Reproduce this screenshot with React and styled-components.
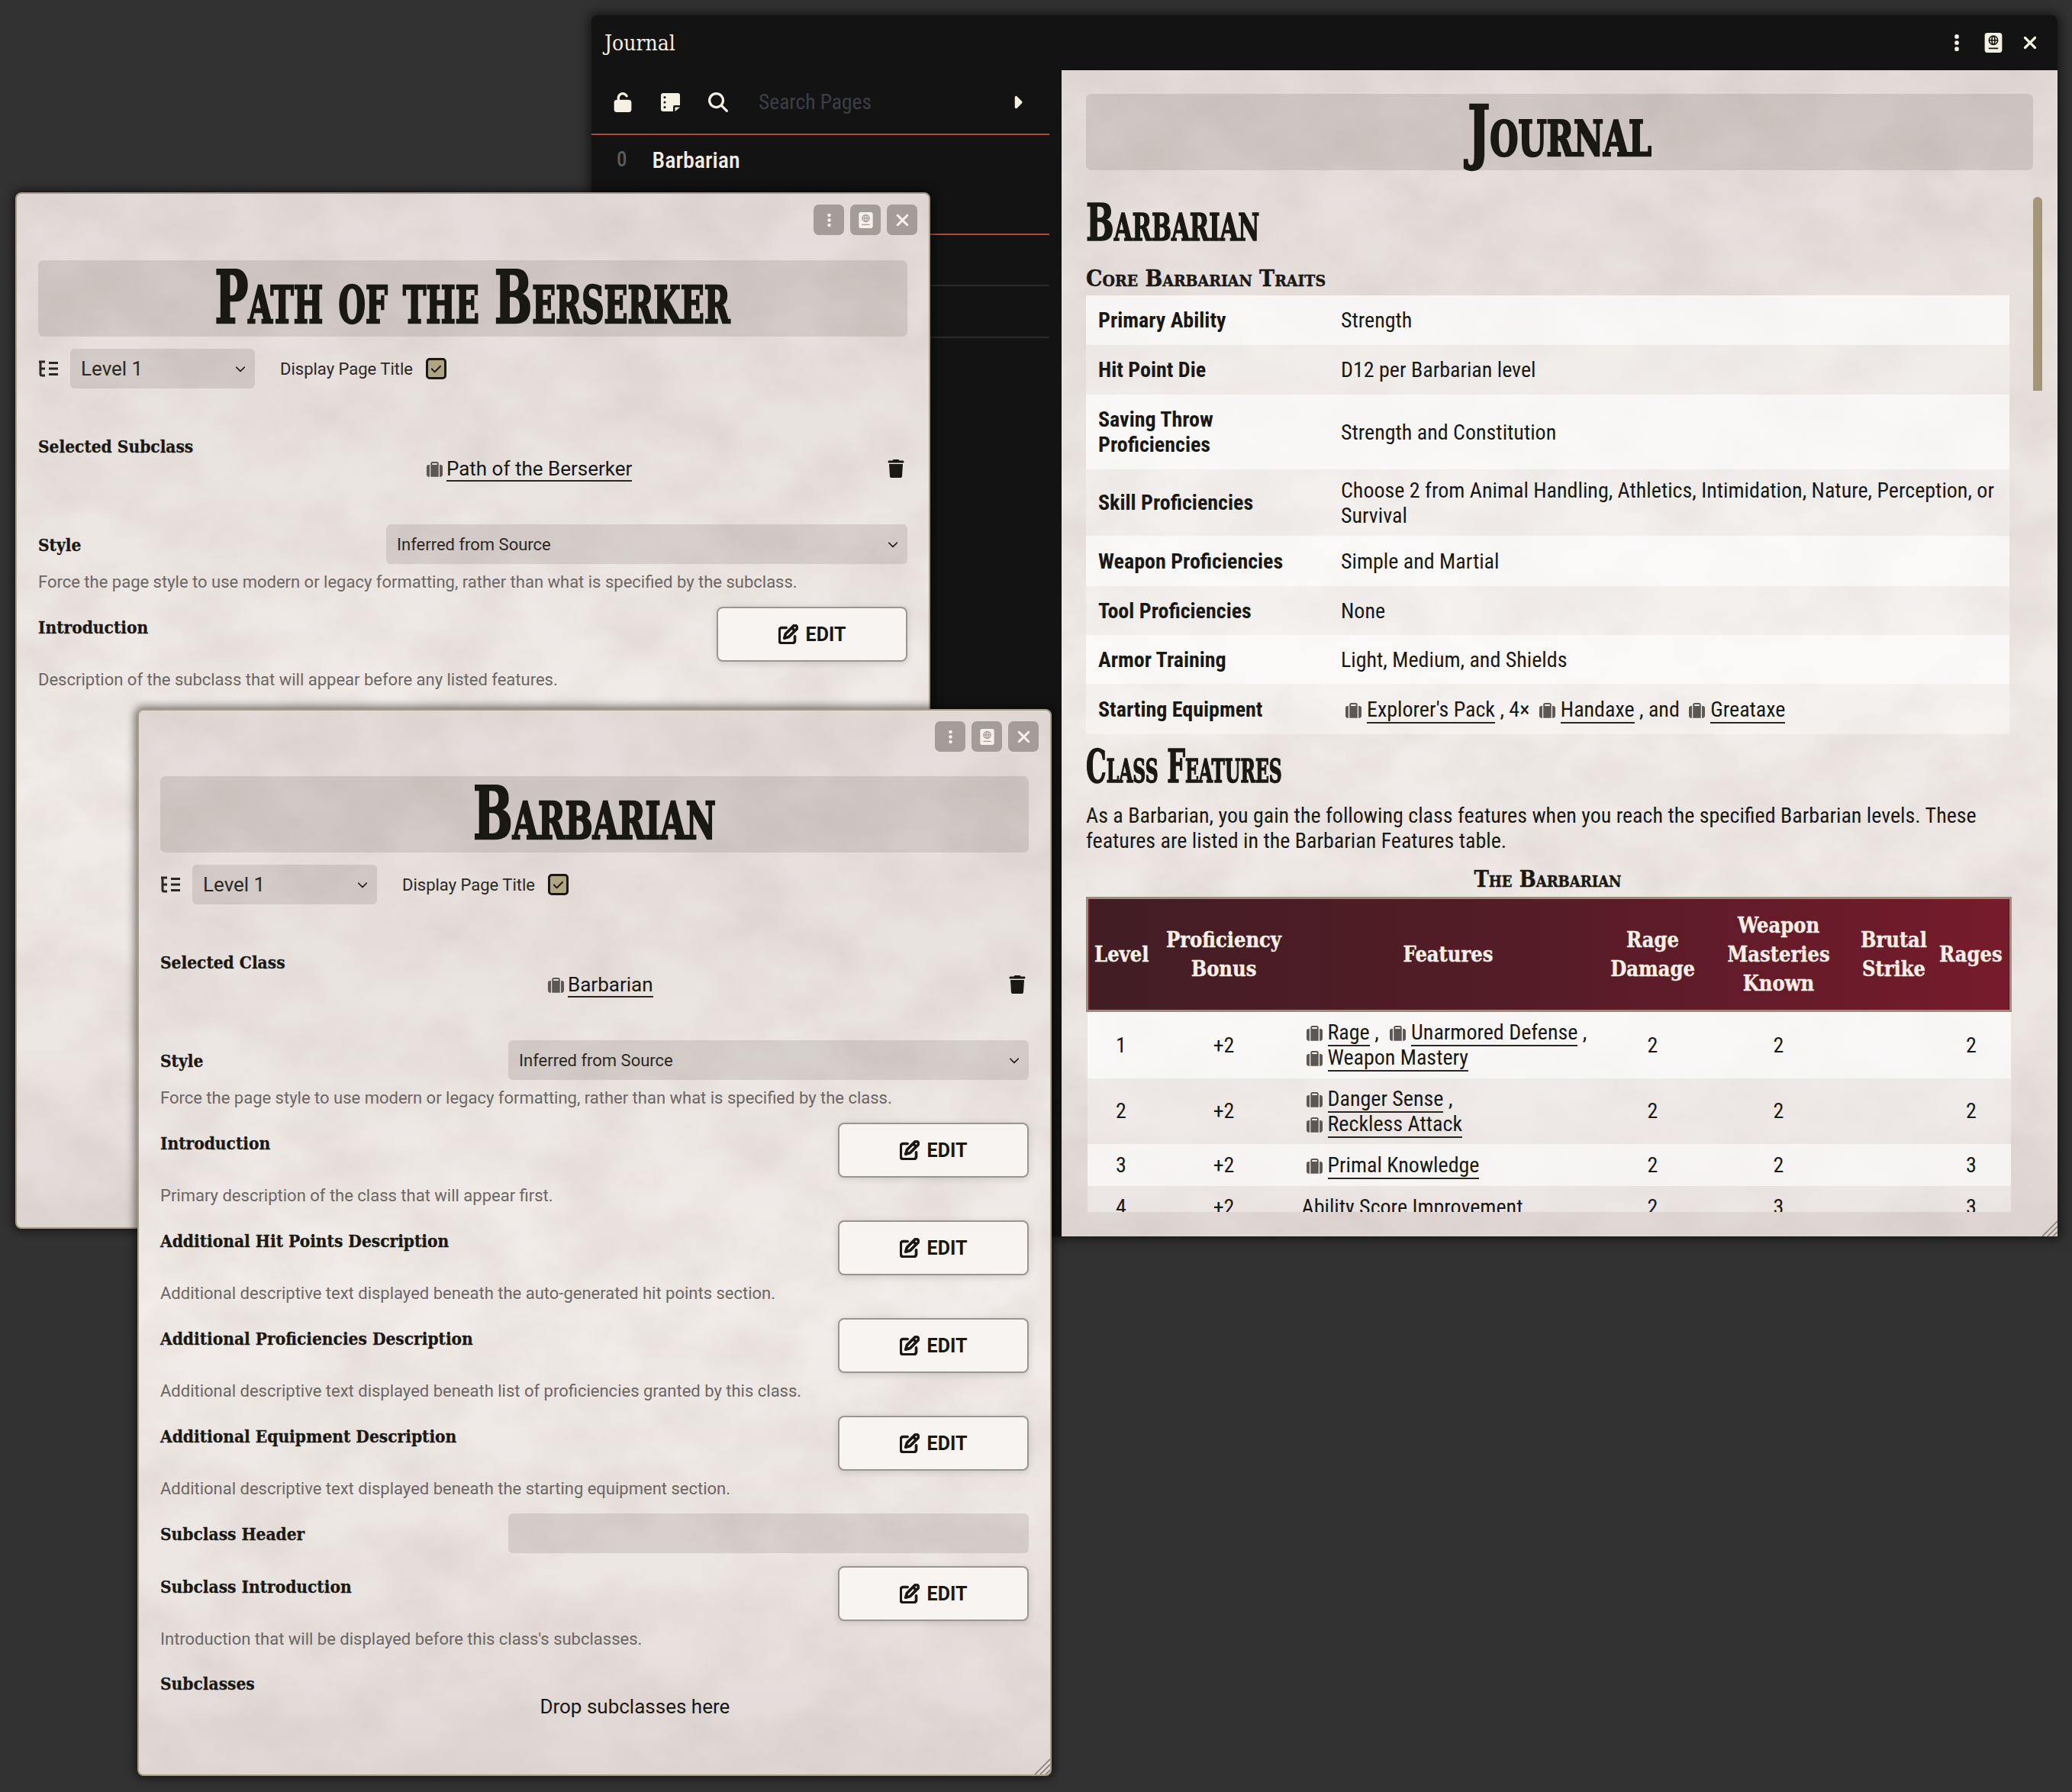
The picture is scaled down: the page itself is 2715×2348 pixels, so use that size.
import React from 'react';
import styled, { createGlobalStyle } from 'styled-components';
import { FaUnlock, FaMagnifyingGlass, FaCaretRight, FaEllipsisVertical, FaPassport, FaXmark, FaChevronDown, FaTrash, FaSuitcase, FaRegPenToSquare, FaCheck } from 'react-icons/fa6';

const noiseSvg = `<svg xmlns="http://www.w3.org/2000/svg" width="1400" height="1400"><filter id="n" x="0" y="0" width="100%" height="100%"><feTurbulence type="fractalNoise" baseFrequency="0.009 0.012" numOctaves="5" seed="7" stitchTiles="stitch"/><feColorMatrix values="0 0 0 0 0.45 0 0 0 0 0.36 0 0 0 0 0.33 0.36 0 0 0 -0.115"/></filter><rect width="1400" height="1400" filter="url(#n)"/></svg>`;
const noise = `url("data:image/svg+xml,${encodeURIComponent(noiseSvg)}")`;

const GlobalStyle = createGlobalStyle`
  html, body { margin: 0; padding: 0; background: #323232; }
  #root { width: 2715px; height: 2348px; position: relative; overflow: hidden; font-family: Roboto, sans-serif; color: #191813; }
  * { box-sizing: border-box; }
`;

const slab = `"DejaVu Serif Condensed", "DejaVu Serif", serif`;

const Desktop = styled.div`
  position: relative;
  width: 2715px;
  height: 2348px;
  background: #323232;
`;

const JournalWindow = styled.section`
  position: absolute;
  left: 775px;
  top: 20px;
  width: 1921px;
  height: 1600px;
  background: #131313;
  border-radius: 8px 8px 0 0;
  box-shadow: 0 0 14px 4px rgba(0, 0, 0, 0.55);
  display: flex;
  flex-direction: column;
`;

const JournalBar = styled.header`
  height: 72px;
  flex: none;
  display: flex;
  align-items: center;
  justify-content: space-between;
  padding: 0 23px 0 17px;
  color: #f5f0e4;
`;

const JournalTitle = styled.h4`
  margin: 0;
  font: 400 28px ${slab};
  color: #f2ede1;
`;

const BarIcons = styled.div`
  display: flex;
  align-items: center;
  gap: 22px;
  font-size: 26px;
  svg { display: block; }
`;

const JournalBody = styled.div`
  flex: 1;
  display: flex;
  min-height: 0;
`;

const Sidebar = styled.aside`
  width: 600px;
  flex: none;
  margin-right: 16px;
`;

const SearchRow = styled.div`
  height: 85px;
  display: flex;
  align-items: center;
  padding: 0 29px 0 28px;
  color: #f5f0e4;
  border-bottom: 2px solid #b34a33;
  font-size: 26px;
  gap: 37px;
  svg { display: block; flex: none; }
`;

const SearchInput = styled.div`
  flex: 1;
  height: 52px;
  padding-left: 3px;
  display: flex;
  align-items: center;
  color: #3c3e47;
  font-size: 27.5px;
  font-stretch: 75%;
`;

const PageRow = styled.div`
  height: ${p => p.$h}px;
  display: flex;
  align-items: center;
  padding-left: 33px;
  gap: 33px;
  border-bottom: 2px solid ${p => p.$line};
`;

const PageNumber = styled.span`
  font-size: 27px;
  color: #5b5b5b;
  font-weight: 500;
  font-stretch: 75%;
`;

const PageName = styled.span`
  font-size: 30px;
  color: #f3eee2;
  font-weight: 500;
  font-stretch: 75%;
`;

const Paper = styled.div`
  background-color: #e9e2df;
  background-image: ${noise}, linear-gradient(180deg, #e4dcda 0%, #e9e3e0 22%, #f2edea 55%, #ece6e3 82%, #e0d7d5 100%);
`;

const Sheet = styled(Paper)`
  flex: 1;
  height: 1528px;
  position: relative;
  padding: 31px 32px 32px;
  overflow: hidden;
`;

const SheetScroll = styled.div`
  height: 1465px;
  overflow: hidden;
  font-size: 28px;
  line-height: 33px;
  font-stretch: 75%;
`;

const Banner = styled.div`
  height: 100px;
  background: rgba(70, 55, 48, 0.13);
  border-radius: 7px;
  display: flex;
  align-items: center;
  justify-content: center;
  margin: ${p => p.$margin || '0'};
  padding-bottom: 2px;
`;

const DisplayTitle = styled.h1`
  margin: 0;
  flex: none;
  white-space: nowrap;
  font: 700 ${p => p.$size || 96}px/1 ${slab};
  font-variant: small-caps;
  color: #191813;
  -webkit-text-stroke: 2.5px #191813;
  transform: scaleX(${p => p.$squeeze || 0.72});
`;

const Scrollbar = styled.div`
  position: absolute;
  right: 20px;
  top: 166px;
  width: 12px;
  height: 254px;
  background: #a39677;
  border-radius: 6px 6px 0 0;
`;

const SectionTitle = styled.h2`
  margin: ${p => p.$margin};
  font: 700 ${p => p.$size}px/1 ${slab};
  font-variant: small-caps;
  color: #191813;
  -webkit-text-stroke: 1.5px #191813;
  transform-origin: left center;
  transform: scaleX(${p => p.$squeeze});
  white-space: nowrap;
`;

const SubTitle = styled.h3`
  margin: ${p => p.$margin};
  width: 1210px;
  font: 700 ${p => p.$size || 30}px/1 ${slab};
  font-variant: small-caps;
  -webkit-text-stroke: 0.4px #191813;
  text-align: ${p => p.$align || 'left'};
  color: #191813;
`;

const InfoTable = styled.table`
  width: 1210px;
  border-collapse: collapse;
  table-layout: fixed;
`;

const InfoRow = styled.tr`
  height: ${p => p.$h}px;
  background: ${p => (p.$alt ? 'rgba(255,255,255,0.35)' : 'rgba(255,255,255,0.72)')};
`;

const InfoLabel = styled.td`
  width: 318px;
  padding: 0 16px;
  font-weight: 700;
`;

const InfoValue = styled.td`
  padding: 0 16px;
`;

const Para = styled.p`
  margin: 0;
  width: 1210px;
`;

const FeatureTable = styled.table`
  width: 1210px;
  border-collapse: collapse;
  table-layout: fixed;
  text-align: center;
`;

const HeadRow = styled.tr`
  height: 148px;
  background: linear-gradient(90deg, #421d24 0%, #561c27 50%, #761b2c 100%);
  border: 3px solid #9a8f75;
`;

const HeadCell = styled.th`
  width: ${p => p.$w}px;
  padding: 0 2px;
  color: #f5f0e6;
  font: 700 27px/38px ${slab};
  -webkit-text-stroke: 0.4px #f5f0e6;
`;

const FeatureRow = styled.tr`
  height: ${p => p.$h}px;
  background: ${p => (p.$alt ? 'rgba(255,255,255,0.35)' : 'rgba(255,255,255,0.72)')};
`;

const FeatureCell = styled.td`
  padding: 0;
`;

const FeatureList = styled.td`
  padding: 0 0 0 ${p => (p.$plain ? 12 : 18)}px;
  text-align: left;
`;

const Link = styled.span`
  white-space: nowrap;
  svg { font-size: 21px; color: #5c5753; margin: 0 7px 0 ${p => p.$lead || 0}px; vertical-align: -3px; }
  b { font-weight: 400; border-bottom: 2px solid #2a2723; }
`;

const Window = styled(Paper)`
  position: absolute;
  left: ${p => p.$x}px;
  top: ${p => p.$y}px;
  width: ${p => p.$w}px;
  height: ${p => p.$h}px;
  border: 2px solid #a79d85;
  border-radius: 8px;
  box-shadow: 0 0 12px 3px rgba(0, 0, 0, 0.55);
  padding: 14px 28px 0;
  overflow: hidden;
`;

const Controls = styled.div`
  display: flex;
  justify-content: flex-end;
  gap: 8px;
  margin-right: -13px;
`;

const ControlButton = styled.button`
  width: 40px;
  height: 40px;
  padding: 0;
  border: none;
  border-radius: 7px;
  background: #a49c99;
  color: #f5f0e8;
  font-size: ${p => p.$icon || 21}px;
  display: flex;
  align-items: center;
  justify-content: center;
`;

const PageTools = styled.div`
  display: flex;
  align-items: center;
  margin-top: 16px;
  height: 52px;
`;

const ToolIcon = styled.svg`
  width: 26px;
  height: 22px;
  margin-right: 16px;
  flex: none;
`;

const SelectBox = styled.div`
  width: ${p => p.$w || 'auto'};
  flex: none;
  height: 52px;
  background: rgba(70, 55, 48, 0.13);
  border-radius: 6px;
  display: flex;
  align-items: center;
  justify-content: space-between;
  padding: 0 12px 0 14px;
  font-size: ${p => p.$font}px;
  color: #2b2824;
  svg { font-size: 14px; color: #191813; }
`;

const ToolLabel = styled.label`
  display: flex;
  align-items: center;
  margin-left: 33px;
  gap: 17px;
  font-size: 22px;
  color: #2b2824;
`;

const CheckBox = styled.span`
  width: 27px;
  height: 28px;
  background: #b0a582;
  border: 3px solid #191813;
  border-radius: 5px;
  display: flex;
  align-items: center;
  justify-content: center;
  font-size: 15px;
  color: #191813;
`;

const SourceRow = styled.div`
  display: flex;
  height: 100px;
  margin-top: 55px;
  position: relative;
`;

const FieldLabel = styled.span`
  font: 700 22.5px/26px ${slab};
  padding-top: ${p => p.$top ?? 14}px;
  -webkit-text-stroke: 0.3px #191813;
  color: #191813;
`;

const SourceZone = styled.div`
  flex: 1;
  display: flex;
  align-items: center;
  justify-content: center;
  padding-right: ${p => p.$pad || 0}px;
  margin-right: ${p => p.$gutter}px;
  font-size: 26px;
  svg { margin-right: 5px; }
`;

const Trash = styled.span`
  position: absolute;
  right: 3px;
  top: 50%;
  transform: translateY(-50%);
  font-size: 24px;
  color: #191813;
  svg { display: block; }
`;

const Field = styled.div`
  margin-top: ${p => p.$top ?? 20}px;
`;

const FieldRow = styled.div`
  display: grid;
  grid-template-columns: 456px 1fr;
  min-height: 52px;
`;

const EditButton = styled.button`
  justify-self: end;
  width: 250px;
  height: 72px;
  background: #f7f4f1;
  border: 2px solid #9a9591;
  border-radius: 8px;
  box-shadow: 0 2px 10px rgba(0, 0, 0, 0.14);
  display: flex;
  align-items: center;
  justify-content: center;
  gap: 10px;
  font: 700 25px Roboto, sans-serif;
  color: #191813;
  svg { font-size: 26px; stroke: currentColor; stroke-width: 24px; }
`;

const Hint = styled.p`
  margin: 12px 0 0;
  font-size: 22px;
  line-height: 24px;
  color: #6b6663;
`;

const DropRow = styled.div`
  display: flex;
  margin-top: 19px;
`;

const DropText = styled.div`
  flex: 1;
  text-align: center;
  font-size: 26px;
  padding: 42px 18px 0 0;
`;

const Handle = styled.svg`
  position: absolute;
  right: 0;
  bottom: 0;
  width: 24px;
  height: 24px;
`;

const NoteIcon = () => (
  <svg width="25" height="24" viewBox="0 0 25 24">
    <path d="M3 0h19a3 3 0 0 1 3 3v13h-7a2 2 0 0 0-2 2v6H3a3 3 0 0 1-3-3V3a3 3 0 0 1 3-3z" fill="#f5f0e4" />
    <path d="M18.500 18.500H25L18.500 24z" fill="#f5f0e4" />
    <circle cx="5" cy="5.500" r="1.500" fill="#131313" />
    <circle cx="5" cy="12" r="1.500" fill="#131313" />
    <circle cx="5" cy="18.500" r="1.500" fill="#131313" />
  </svg>
);

const TreeIcon = () => (
  <ToolIcon viewBox="0 0 26 22" fill="none" stroke="#2b2824" strokeWidth="3">
    <path d="M3 1v17a2 2 0 0 0 2 2h4M3 11h6M1 2h8" />
    <path d="M14 3.500h12M14 11h12M14 18.500h12" />
  </ToolIcon>
);

const ResizeGrip = () => (
  <Handle viewBox="0 0 24 24" fill="none" stroke="#7d766a" strokeWidth="1.500">
    <path d="M4 24L24 4M11 24L24 11M18 24l6-6" />
  </Handle>
);

const ItemLink = ({ children, lead }) => (
  <Link $lead={lead}><FaSuitcase /><b>{children}</b></Link>
);

const traits = [
  { label: 'Primary Ability', value: 'Strength', h: 65 },
  { label: 'Hit Point Die', value: 'D12 per Barbarian level', h: 65 },
  { label: 'Saving Throw Proficiencies', value: 'Strength and Constitution', h: 98 },
  { label: 'Skill Proficiencies', value: 'Choose 2 from Animal Handling, Athletics, Intimidation, Nature, Perception, or Survival', h: 87 },
  { label: 'Weapon Proficiencies', value: 'Simple and Martial', h: 66 },
  { label: 'Tool Proficiencies', value: 'None', h: 64 },
  { label: 'Armor Training', value: 'Light, Medium, and Shields', h: 64 },
];

const columns = [
  { w: 89, lines: ['Level'] },
  { w: 180, lines: ['Proficiency', 'Bonus'] },
  { w: 408, lines: ['Features'] },
  { w: 128, lines: ['Rage', 'Damage'] },
  { w: 202, lines: ['Weapon', 'Masteries', 'Known'] },
  { w: 100, lines: ['Brutal', 'Strike'] },
  { w: 103, lines: ['Rages'] },
];

const levels = [
  { n: 1, rage: 2, masteries: 2, rages: 2, h: 88, features: <><ItemLink>Rage</ItemLink> , <ItemLink lead={8}>Unarmored Defense</ItemLink> ,<br /><ItemLink>Weapon Mastery</ItemLink></> },
  { n: 2, rage: 2, masteries: 2, rages: 2, h: 86, features: <><ItemLink>Danger Sense</ItemLink> ,<br /><ItemLink>Reckless Attack</ItemLink></> },
  { n: 3, rage: 2, masteries: 2, rages: 3, h: 55, features: <ItemLink>Primal Knowledge</ItemLink> },
  { n: 4, rage: 2, masteries: 3, rages: 3, h: 55, features: 'Ability Score Improvement', plain: true },
];

const BuilderFields = ({ items }) => items.map(item => (
  <Field key={item.label} $top={item.top}>
    <FieldRow>
      <FieldLabel>{item.label}</FieldLabel>
      {item.select !== undefined
        ? <SelectBox $font={22}>{item.select}{item.select && <FaChevronDown />}</SelectBox>
        : <EditButton><FaRegPenToSquare />EDIT</EditButton>}
    </FieldRow>
    {item.hint && <Hint>{item.hint}</Hint>}
  </Field>
));

const WindowHead = ({ title, size, squeeze, bannerTop }) => (
  <>
    <Controls>
      <ControlButton><FaEllipsisVertical /></ControlButton>
      <ControlButton><FaPassport /></ControlButton>
      <ControlButton $icon={25}><FaXmark /></ControlButton>
    </Controls>
    <Banner $margin={`${bannerTop}px 0 0`}><DisplayTitle $size={size} $squeeze={squeeze}>{title}</DisplayTitle></Banner>
    <PageTools>
      <TreeIcon />
      <SelectBox $w="242px" $font={26}>Level 1<FaChevronDown /></SelectBox>
      <ToolLabel>Display Page Title<CheckBox><FaCheck /></CheckBox></ToolLabel>
    </PageTools>
  </>
);

const subclassFields = [
  { label: 'Style', select: 'Inferred from Source', top: 23, hint: 'Force the page style to use modern or legacy formatting, rather than what is specified by the subclass.' },
  { label: 'Introduction', hint: 'Description of the subclass that will appear before any listed features.' },
];

const classFields = [
  { label: 'Style', select: 'Inferred from Source', top: 23, hint: 'Force the page style to use modern or legacy formatting, rather than what is specified by the class.' },
  { label: 'Introduction', hint: 'Primary description of the class that will appear first.' },
  { label: 'Additional Hit Points Description', hint: 'Additional descriptive text displayed beneath the auto-generated hit points section.' },
  { label: 'Additional Proficiencies Description', hint: 'Additional descriptive text displayed beneath list of proficiencies granted by this class.' },
  { label: 'Additional Equipment Description', hint: 'Additional descriptive text displayed beneath the starting equipment section.' },
  { label: 'Subclass Header', select: '' },
  { label: 'Subclass Introduction', top: 17, hint: "Introduction that will be displayed before this class's subclasses." },
];

export default function App() {
  return (
    <Desktop>
      <GlobalStyle />

      <JournalWindow>
        <JournalBar>
          <JournalTitle>Journal</JournalTitle>
          <BarIcons>
            <FaEllipsisVertical />
            <FaPassport />
            <FaXmark />
          </BarIcons>
        </JournalBar>
        <JournalBody>
          <Sidebar>
            <SearchRow>
              <FaUnlock />
              <NoteIcon />
              <FaMagnifyingGlass />
              <SearchInput>Search Pages</SearchInput>
              <FaCaretRight />
            </SearchRow>
            <PageRow $h={66} $line="transparent"><PageNumber>0</PageNumber><PageName>Barbarian</PageName></PageRow>
            <PageRow $h={65} $line="#b34a33" />
            <PageRow $h={67} $line="#2a2a2a" />
            <PageRow $h={68} $line="#2a2a2a" />
          </Sidebar>
          <Sheet>
            <SheetScroll>
              <Banner><DisplayTitle $size={92} $squeeze={0.74}>Journal</DisplayTitle></Banner>
              <SectionTitle $size={68} $squeeze={0.71} $margin="34px 0 0">Barbarian</SectionTitle>
              <SubTitle $margin="25px 0 7px">Core Barbarian Traits</SubTitle>
              <InfoTable>
                <tbody>
                  {traits.map((row, i) => (
                    <InfoRow key={row.label} $h={row.h} $alt={i % 2 === 1}>
                      <InfoLabel>{row.label}</InfoLabel>
                      <InfoValue>{row.value}</InfoValue>
                    </InfoRow>
                  ))}
                  <InfoRow $h={66} $alt>
                    <InfoLabel>Starting Equipment</InfoLabel>
                    <InfoValue><ItemLink lead={6}>Explorer's Pack</ItemLink> , 4× <ItemLink lead={6}>Handaxe</ItemLink> , and <ItemLink lead={6}>Greataxe</ItemLink></InfoValue>
                  </InfoRow>
                </tbody>
              </InfoTable>
              <SectionTitle $size={60} $squeeze={0.62} $margin="12px 0 18px">Class Features</SectionTitle>
              <Para>As a Barbarian, you gain the following class features when you reach the specified Barbarian levels. These features are listed in the Barbarian Features table.</Para>
              <SubTitle $size={29} $align="center" $margin="20px 0 8px">The Barbarian</SubTitle>
              <FeatureTable>
                <thead>
                  <HeadRow>
                    {columns.map(col => (
                      <HeadCell key={col.lines[0]} $w={col.w}>
                        {col.lines.map((line, i) => <React.Fragment key={line}>{i > 0 && <br />}{line}</React.Fragment>)}
                      </HeadCell>
                    ))}
                  </HeadRow>
                </thead>
                <tbody>
                  {levels.map((row, i) => (
                    <FeatureRow key={row.n} $h={row.h} $alt={i % 2 === 1}>
                      <FeatureCell>{row.n}</FeatureCell>
                      <FeatureCell>+2</FeatureCell>
                      <FeatureList $plain={row.plain}>{row.features}</FeatureList>
                      <FeatureCell>{row.rage}</FeatureCell>
                      <FeatureCell>{row.masteries}</FeatureCell>
                      <FeatureCell />
                      <FeatureCell>{row.rages}</FeatureCell>
                    </FeatureRow>
                  ))}
                </tbody>
              </FeatureTable>
            </SheetScroll>
            <Scrollbar />
            <ResizeGrip />
          </Sheet>
        </JournalBody>
      </JournalWindow>

      <Window $x={20} $y={252} $w={1199} $h={1358}>
        <WindowHead title="Path of the Berserker" size={96} squeeze={0.675} bannerTop={33} />
        <SourceRow>
          <FieldLabel $top={8}>Selected Subclass</FieldLabel>
          <SourceZone $gutter={55}><ItemLink>Path of the Berserker</ItemLink></SourceZone>
          <Trash><FaTrash /></Trash>
        </SourceRow>
        <BuilderFields items={subclassFields} />
      </Window>

      <Window $x={180} $y={929} $w={1198} $h={1398}>
        <WindowHead title="Barbarian" size={96} squeeze={0.71} bannerTop={32} />
        <SourceRow>
          <FieldLabel $top={8}>Selected Class</FieldLabel>
          <SourceZone $gutter={55} $pad={93}><ItemLink>Barbarian</ItemLink></SourceZone>
          <Trash><FaTrash /></Trash>
        </SourceRow>
        <BuilderFields items={classFields} />
        <DropRow>
          <FieldLabel>Subclasses</FieldLabel>
          <DropText>Drop subclasses here</DropText>
        </DropRow>
        <ResizeGrip />
      </Window>
    </Desktop>
  );
}
